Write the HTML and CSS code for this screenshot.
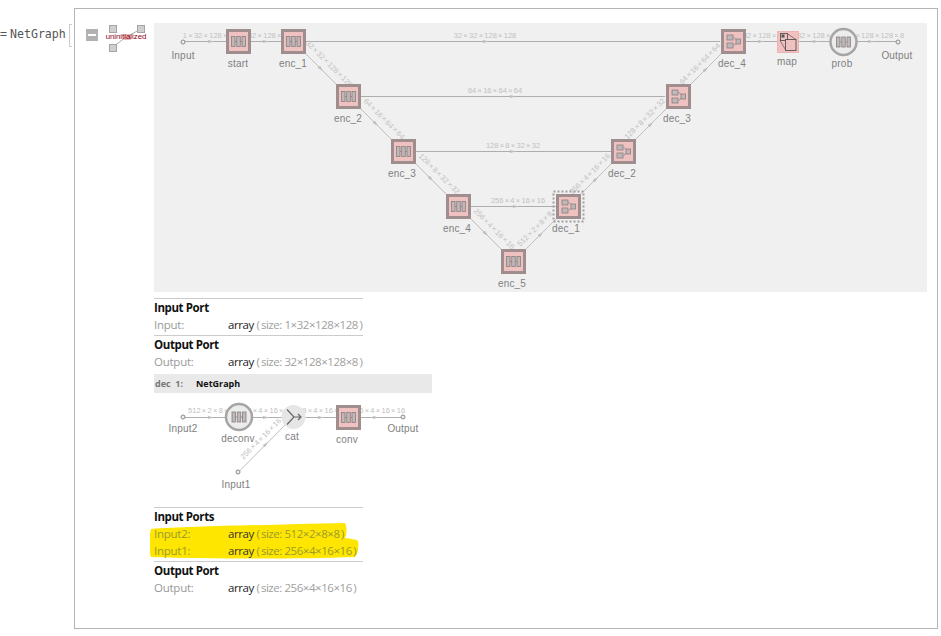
FILE: index.html
```html
<!DOCTYPE html>
<html lang="en">
<head>
<meta charset="utf-8">
<title>NetGraph</title>
<link rel="stylesheet" href="styles.css">
</head>
<body>
<svg class="defs" width="0" height="0" aria-hidden="true">
  <defs>
    <g id="chain">
      <path class="link" d="M-6 0H6"/>
      <rect class="bar" x="-7" y="-5" width="3.5" height="10"/>
      <rect class="bar" x="-1.75" y="-5" width="3.5" height="10"/>
      <rect class="bar" x="3.5" y="-5" width="3.5" height="10"/>
    </g>
    <g id="net">
      <rect class="node" x="-11" y="-11" width="22" height="22"/>
      <use href="#chain"/>
    </g>
    <g id="sub">
      <rect class="node" x="-11" y="-11" width="22" height="22"/>
      <path class="link" d="M0 -4.5L3 -1.5M0 4L3 1.5"/>
      <rect class="bar" x="-6.5" y="-6.5" width="6" height="5"/>
      <rect class="bar" x="-6.5" y="1.5" width="6" height="5"/>
      <rect class="bar" x="2.5" y="-2.5" width="4.5" height="5"/>
    </g>
    <g id="layer">
      <circle class="ring" r="13"/>
      <use href="#chain"/>
    </g>
    <path id="arrow" class="head" d="M-3 -1.6L3 0L-3 1.6Z"/>
    <circle id="port" class="port" r="2"/>
  </defs>
</svg>

<main class="app">
  <div class="prompt">
    <span class="prompt-text">= NetGraph</span>
    <span class="bracket"></span>
  </div>
  <div class="frame">
    <div class="gutter">
      <div class="toggle"><span class="toggle-bar"></span></div>
      <svg class="uninit" width="42" height="28" viewBox="0 0 42 28">
        <path class="uninit-line" d="M8 23L21 13L36 5"/>
        <rect class="uninit-mid" x="18" y="10" width="8" height="6"/>
        <rect class="uninit-sq" x="4.5" y="1.5" width="7" height="7"/>
        <rect class="uninit-sq" x="32.5" y="1.5" width="7" height="7"/>
        <rect class="uninit-sq" x="4.5" y="20.5" width="7" height="7"/>
        <text class="uninit-text" x="21" y="15" text-anchor="middle">uninitialized</text>
      </svg>
    </div>
    <div class="content">
      <div class="graph-panel">
        <svg class="graph" width="773" height="269" viewBox="154 23 773 269">
          <g class="edges">
            <path d="M183 41.5H226M251 41.5H281M306 41.5H720M746 41.5H777M799 41.5H830M857 41.5H898"/>
            <path d="M361 96.5H665M416 151.5H611M471 206.5H556"/>
          </g>
          <g class="edges edges-diag">
            <path d="M293.5 41.5L513.5 261.5L733.5 41.5"/>
          </g>
          <use href="#arrow" x="211" y="41.5"/>
          <use href="#arrow" x="266" y="41.5"/>
          <use href="#arrow" x="486" y="41.5"/>
          <use href="#arrow" x="761" y="41.5"/>
          <use href="#arrow" x="816" y="41.5"/>
          <use href="#arrow" x="871" y="41.5"/>
          <use href="#arrow" x="513" y="96.5"/>
          <use href="#arrow" x="513" y="151.5"/>
          <use href="#arrow" x="516" y="206.5"/>
          <use href="#arrow" transform="translate(321 69) rotate(45)"/>
          <use href="#arrow" transform="translate(376 124) rotate(45)"/>
          <use href="#arrow" transform="translate(431 179) rotate(45)"/>
          <use href="#arrow" transform="translate(486 234) rotate(45)"/>
          <use href="#arrow" transform="translate(541 234) rotate(-45)"/>
          <use href="#arrow" transform="translate(596 179) rotate(-45)"/>
          <use href="#arrow" transform="translate(651 124) rotate(-45)"/>
          <use href="#arrow" transform="translate(706 69) rotate(-45)"/>

          <g class="edge-labels" text-anchor="middle">
            <text x="212" y="38">1 × 32 × 128 × 128</text>
            <text x="266" y="38">8 × 32 × 128 × 128</text>
            <text x="485" y="38">32 × 32 × 128 × 128</text>
            <text x="761" y="38">8 × 32 × 128 × 128</text>
            <text x="815" y="38">8 × 32 × 128 × 128</text>
            <text x="875" y="38">32 × 128 × 128 × 8</text>
            <text x="495" y="93">64 × 16 × 64 × 64</text>
            <text x="513" y="148">128 × 8 × 32 × 32</text>
            <text x="518" y="203">256 × 4 × 16 × 16</text>
            <text transform="translate(326 67) rotate(45)" y="-2">32 × 32 × 128 × 128</text>
            <text transform="translate(381 122) rotate(45)" y="-2">64 × 16 × 64 × 64</text>
            <text transform="translate(436 177) rotate(45)" y="-2">128 × 8 × 32 × 32</text>
            <text transform="translate(491 232) rotate(45)" y="-2">256 × 4 × 16 × 16</text>
            <text transform="translate(538 232) rotate(-45)" y="-2">512 × 2 × 8 × 8</text>
            <text transform="translate(593 177) rotate(-45)" y="-2">256 × 4 × 16 × 16</text>
            <text transform="translate(648 122) rotate(-45)" y="-2">128 × 8 × 32 × 32</text>
            <text transform="translate(703 67) rotate(-45)" y="-2">64 × 16 × 64 × 64</text>
          </g>

          <rect class="selection" x="553.5" y="191.5" width="30" height="30"/>
          <use href="#port" x="183" y="42"/>
          <use href="#port" x="898" y="42"/>
          <use href="#net" x="238.5" y="41.5"/>
          <use href="#net" x="293.5" y="41.5"/>
          <use href="#net" x="348.5" y="96.5"/>
          <use href="#net" x="403.5" y="151.5"/>
          <use href="#net" x="458.5" y="206.5"/>
          <use href="#net" x="513.5" y="261.5"/>
          <use href="#sub" x="568.5" y="206.5"/>
          <use href="#sub" x="623.5" y="151.5"/>
          <use href="#sub" x="678.5" y="96.5"/>
          <use href="#sub" x="733.5" y="41.5"/>
          <g>
            <rect class="map-box" x="777.5" y="31.5" width="21" height="21"/>
            <path class="map-link" d="M787 33.5L796 39.5M780 40.5L786 50.5"/>
            <rect class="map-back" x="780.5" y="33.5" width="7" height="7"/>
            <rect class="map-dot" x="781.5" y="34.5" width="3" height="3"/>
            <rect class="map-front" x="785.5" y="39.5" width="10.5" height="11"/>
          </g>
          <use href="#layer" x="843.5" y="42"/>

          <g class="node-labels" text-anchor="middle">
            <text x="183" y="59">Input</text>
            <text x="238" y="66.5">start</text>
            <text x="293" y="66.5">enc_1</text>
            <text x="348" y="121.5">enc_2</text>
            <text x="402" y="176.5">enc_3</text>
            <text x="457" y="231.5">enc_4</text>
            <text x="512" y="286.5">enc_5</text>
            <text x="566" y="231.5">dec_1</text>
            <text x="622" y="176.5">dec_2</text>
            <text x="677" y="121.5">dec_3</text>
            <text x="732" y="66.5">dec_4</text>
            <text x="787" y="65">map</text>
            <text x="842" y="66.5">prob</text>
            <text x="897" y="59">Output</text>
          </g>
        </svg>
      </div>

      <section class="ports ports-first">
        <h3 class="ports-title">Input Port</h3>
        <div class="port-row"><span class="port-name">Input:</span><span class="port-type"><b>array</b> (&#8201;size: 1×32×128×128&#8201;)</span></div>
      </section>
      <section class="ports">
        <h3 class="ports-title">Output Port</h3>
        <div class="port-row"><span class="port-name">Output:</span><span class="port-type"><b>array</b> (&#8201;size: 32×128×128×8&#8201;)</span></div>
      </section>

      <div class="sub-bar"><span class="sub-name">dec&nbsp;&nbsp;1:</span><span class="sub-kind">NetGraph</span></div>

      <svg class="mini" width="278" height="114" viewBox="154 394 278 114">
        <g class="edges">
          <path d="M183 418.5H403"/>
        </g>
        <g class="edges edges-diag">
          <path d="M238.5 473L292 419"/>
        </g>
        <use href="#arrow" x="211" y="418.5"/>
        <use href="#arrow" x="266" y="418.5"/>
        <use href="#arrow" x="321" y="418.5"/>
        <use href="#arrow" x="376" y="418.5"/>
        <use href="#arrow" transform="translate(266 445) rotate(-45)"/>
        <g class="edge-labels" text-anchor="middle">
          <text x="211" y="414">512 × 2 × 8 × 8</text>
          <text x="266" y="414">512 × 4 × 16 × 16</text>
          <text x="321" y="414">768 × 4 × 16 × 16</text>
          <text x="378" y="414">256 × 4 × 16 × 16</text>
          <text transform="translate(264 443) rotate(-45)" y="-2">256 × 4 × 16 × 16</text>
        </g>
        <use href="#port" x="183" y="418"/>
        <use href="#port" x="403" y="418"/>
        <use href="#port" x="238" y="473"/>
        <use href="#layer" x="239" y="418"/>
        <circle class="cat" cx="293.5" cy="418" r="12"/>
        <path class="cat-mark" d="M287 410.5L294 418L287 425.5M294 418H301M298 415L301 418L298 421"/>
        <use href="#net" x="348.5" y="418.5"/>
        <g class="node-labels" text-anchor="middle">
          <text x="183" y="433">Input2</text>
          <text x="238" y="443">deconv</text>
          <text x="292" y="441">cat</text>
          <text x="347" y="444">conv</text>
          <text x="403" y="433">Output</text>
          <text x="236" y="489">Input1</text>
        </g>
      </svg>

      <section class="ports">
        <h3 class="ports-title">Input Ports</h3>
        <div class="marked">
          <svg class="marker" width="212" height="40" viewBox="0 0 212 40">
            <path d="M1 7C40 4 120 3 195 1C197 5 197 12 195 16C200 17 206 17 208 19C209 25 208 32 205 35C150 37 60 37 1 35C-2 28 -1 14 1 7Z"/>
          </svg>
          <div class="port-row"><span class="port-name">Input2:</span><span class="port-type"><b>array</b> (&#8201;size: 512×2×8×8&#8201;)</span></div>
          <div class="port-row"><span class="port-name">Input1:</span><span class="port-type"><b>array</b> (&#8201;size: 256×4×16×16&#8201;)</span></div>
        </div>
      </section>
      <section class="ports ports-gap">
        <h3 class="ports-title">Output Port</h3>
        <div class="port-row"><span class="port-name">Output:</span><span class="port-type"><b>array</b> (&#8201;size: 256×4×16×16&#8201;)</span></div>
      </section>
    </div>
  </div>
</main>
</body>
</html>
```

FILE: styles.css
```css
html, body {
  margin: 0;
  padding: 0;
  background: #fff;
}

.defs {
  position: absolute;
}

.app {
  display: flex;
  align-items: flex-start;
  width: 941px;
  height: 636px;
  overflow: hidden;
}

.prompt {
  width: 74px;
  flex: none;
  display: flex;
  align-items: flex-start;
  padding-top: 24px;
  box-sizing: border-box;
}

.prompt-text {
  width: 69px;
  flex: none;
  font: 11.6px/21px "DejaVu Sans Mono", monospace;
  word-spacing: -4px;
  color: #555;
  white-space: pre;
}

.bracket {
  width: 2px;
  height: 21px;
  border: 1px solid #ccc;
  border-right: 0;
}

.frame {
  display: flex;
  width: 864px;
  height: 621px;
  margin-top: 8px;
  box-sizing: border-box;
  border: 1px solid #b4b4b4;
}

.gutter {
  width: 79px;
  flex: none;
  display: flex;
  align-items: flex-start;
  padding: 15px 0 0 11px;
  box-sizing: border-box;
}

.toggle {
  width: 12px;
  height: 12px;
  margin-top: 5px;
  flex: none;
  display: flex;
  align-items: center;
  justify-content: center;
  background: #b2b2b2;
}

.toggle-bar {
  width: 8px;
  height: 2px;
  background: #fff;
}

.uninit {
  margin-left: 7px;
  flex: none;
}

.uninit-sq {
  fill: #cfcfcf;
  stroke: #a5a5a5;
  stroke-width: 1;
}

.uninit-mid {
  fill: #e8bcbc;
}

.uninit-line {
  fill: none;
  stroke: #aaa;
}

.uninit-text {
  font: 7.8px "Liberation Sans", sans-serif;
  fill: #8c0018;
}

.content {
  width: 773px;
  padding-top: 14px;
}

.graph-panel {
  background: #f0f0f0;
  height: 269px;
}

.graph, .mini {
  display: block;
}

.edges path {
  fill: none;
  stroke: #aeaeae;
  stroke-width: 1;
}

.edges-diag path {
  stroke: #b8b8b8;
  stroke-width: 0.9;
}

.head {
  fill: #bdbdbd;
}

.edge-labels text {
  font: 7.5px "Liberation Sans", sans-serif;
  word-spacing: -0.8px;
  fill: #c0c0c0;
}

.node-labels text {
  font: 10px "Liberation Sans", sans-serif;
  letter-spacing: 0.2px;
  fill: #808080;
}

.node {
  fill: #efc1c1;
  stroke: #a08d8d;
  stroke-width: 3;
}

.bar {
  fill: #c0b8b8;
  stroke: #888080;
  stroke-width: 0.8;
}

.link {
  fill: none;
  stroke: #888080;
  stroke-width: 0.8;
}

.ring {
  fill: #ececec;
  stroke: #a5a5a5;
  stroke-width: 2.5;
}

.port {
  fill: #f0f0f0;
  stroke: #888;
  stroke-width: 1;
}

.selection {
  fill: none;
  stroke: #a0a0a0;
  stroke-width: 2;
  stroke-dasharray: 2 2;
}

.map-box {
  fill: #f3bfbf;
  stroke: #e8b4b4;
}

.map-link {
  fill: none;
  stroke: #666;
  stroke-width: 0.8;
}

.map-back {
  fill: #efc1c1;
  stroke: #555;
  stroke-width: 0.9;
}

.map-dot {
  fill: #555;
}

.map-front {
  fill: #efc1c1;
  stroke: #555;
  stroke-width: 0.9;
}

.cat {
  fill: #e6e6e6;
}

.cat-mark {
  fill: none;
  stroke: #666;
  stroke-width: 1.2;
}

.ports {
  width: 209px;
  border-top: 1px solid #ccc;
  font: 11.5px/17px "Open Sans", "Liberation Sans", sans-serif;
  letter-spacing: -0.25px;
}

.ports-first {
  margin-top: 6px;
}

.ports + .ports {
  margin-top: 2px;
}

.ports-title {
  margin: 0;
  font: 700 11.5px/17px "Open Sans", "Liberation Sans", sans-serif;
  letter-spacing: -0.4px;
  color: #111;
}

.port-row {
  position: relative;
  display: flex;
  height: 17px;
  white-space: nowrap;
}

.port-name {
  width: 74px;
  flex: none;
  color: #999;
}

.port-type {
  color: #a0a0a0;
  letter-spacing: -0.45px;
}

.port-type b {
  font-weight: 400;
  letter-spacing: -0.4px;
  color: #222;
}

.sub-bar {
  display: flex;
  align-items: center;
  width: 278px;
  height: 19px;
  margin-top: 4px;
  background: #e9e9e9;
  font: 700 9px/19px "Open Sans", "Liberation Sans", sans-serif;
}

.sub-name {
  width: 42px;
  padding-left: 1px;
  box-sizing: border-box;
  flex: none;
  color: #777;
}

.sub-kind {
  color: #111;
}

.marked {
  position: relative;
}

.marker {
  position: absolute;
  left: -4px;
  top: -3px;
}

.marker path {
  fill: #ffe600;
}

.marked .port-name {
  color: #9a9a30;
}

.marked .port-type {
  color: #9a9a30;
}

.marked .port-type b {
  color: #333;
}

.ports-gap {
  margin-top: 3px;
}
```
